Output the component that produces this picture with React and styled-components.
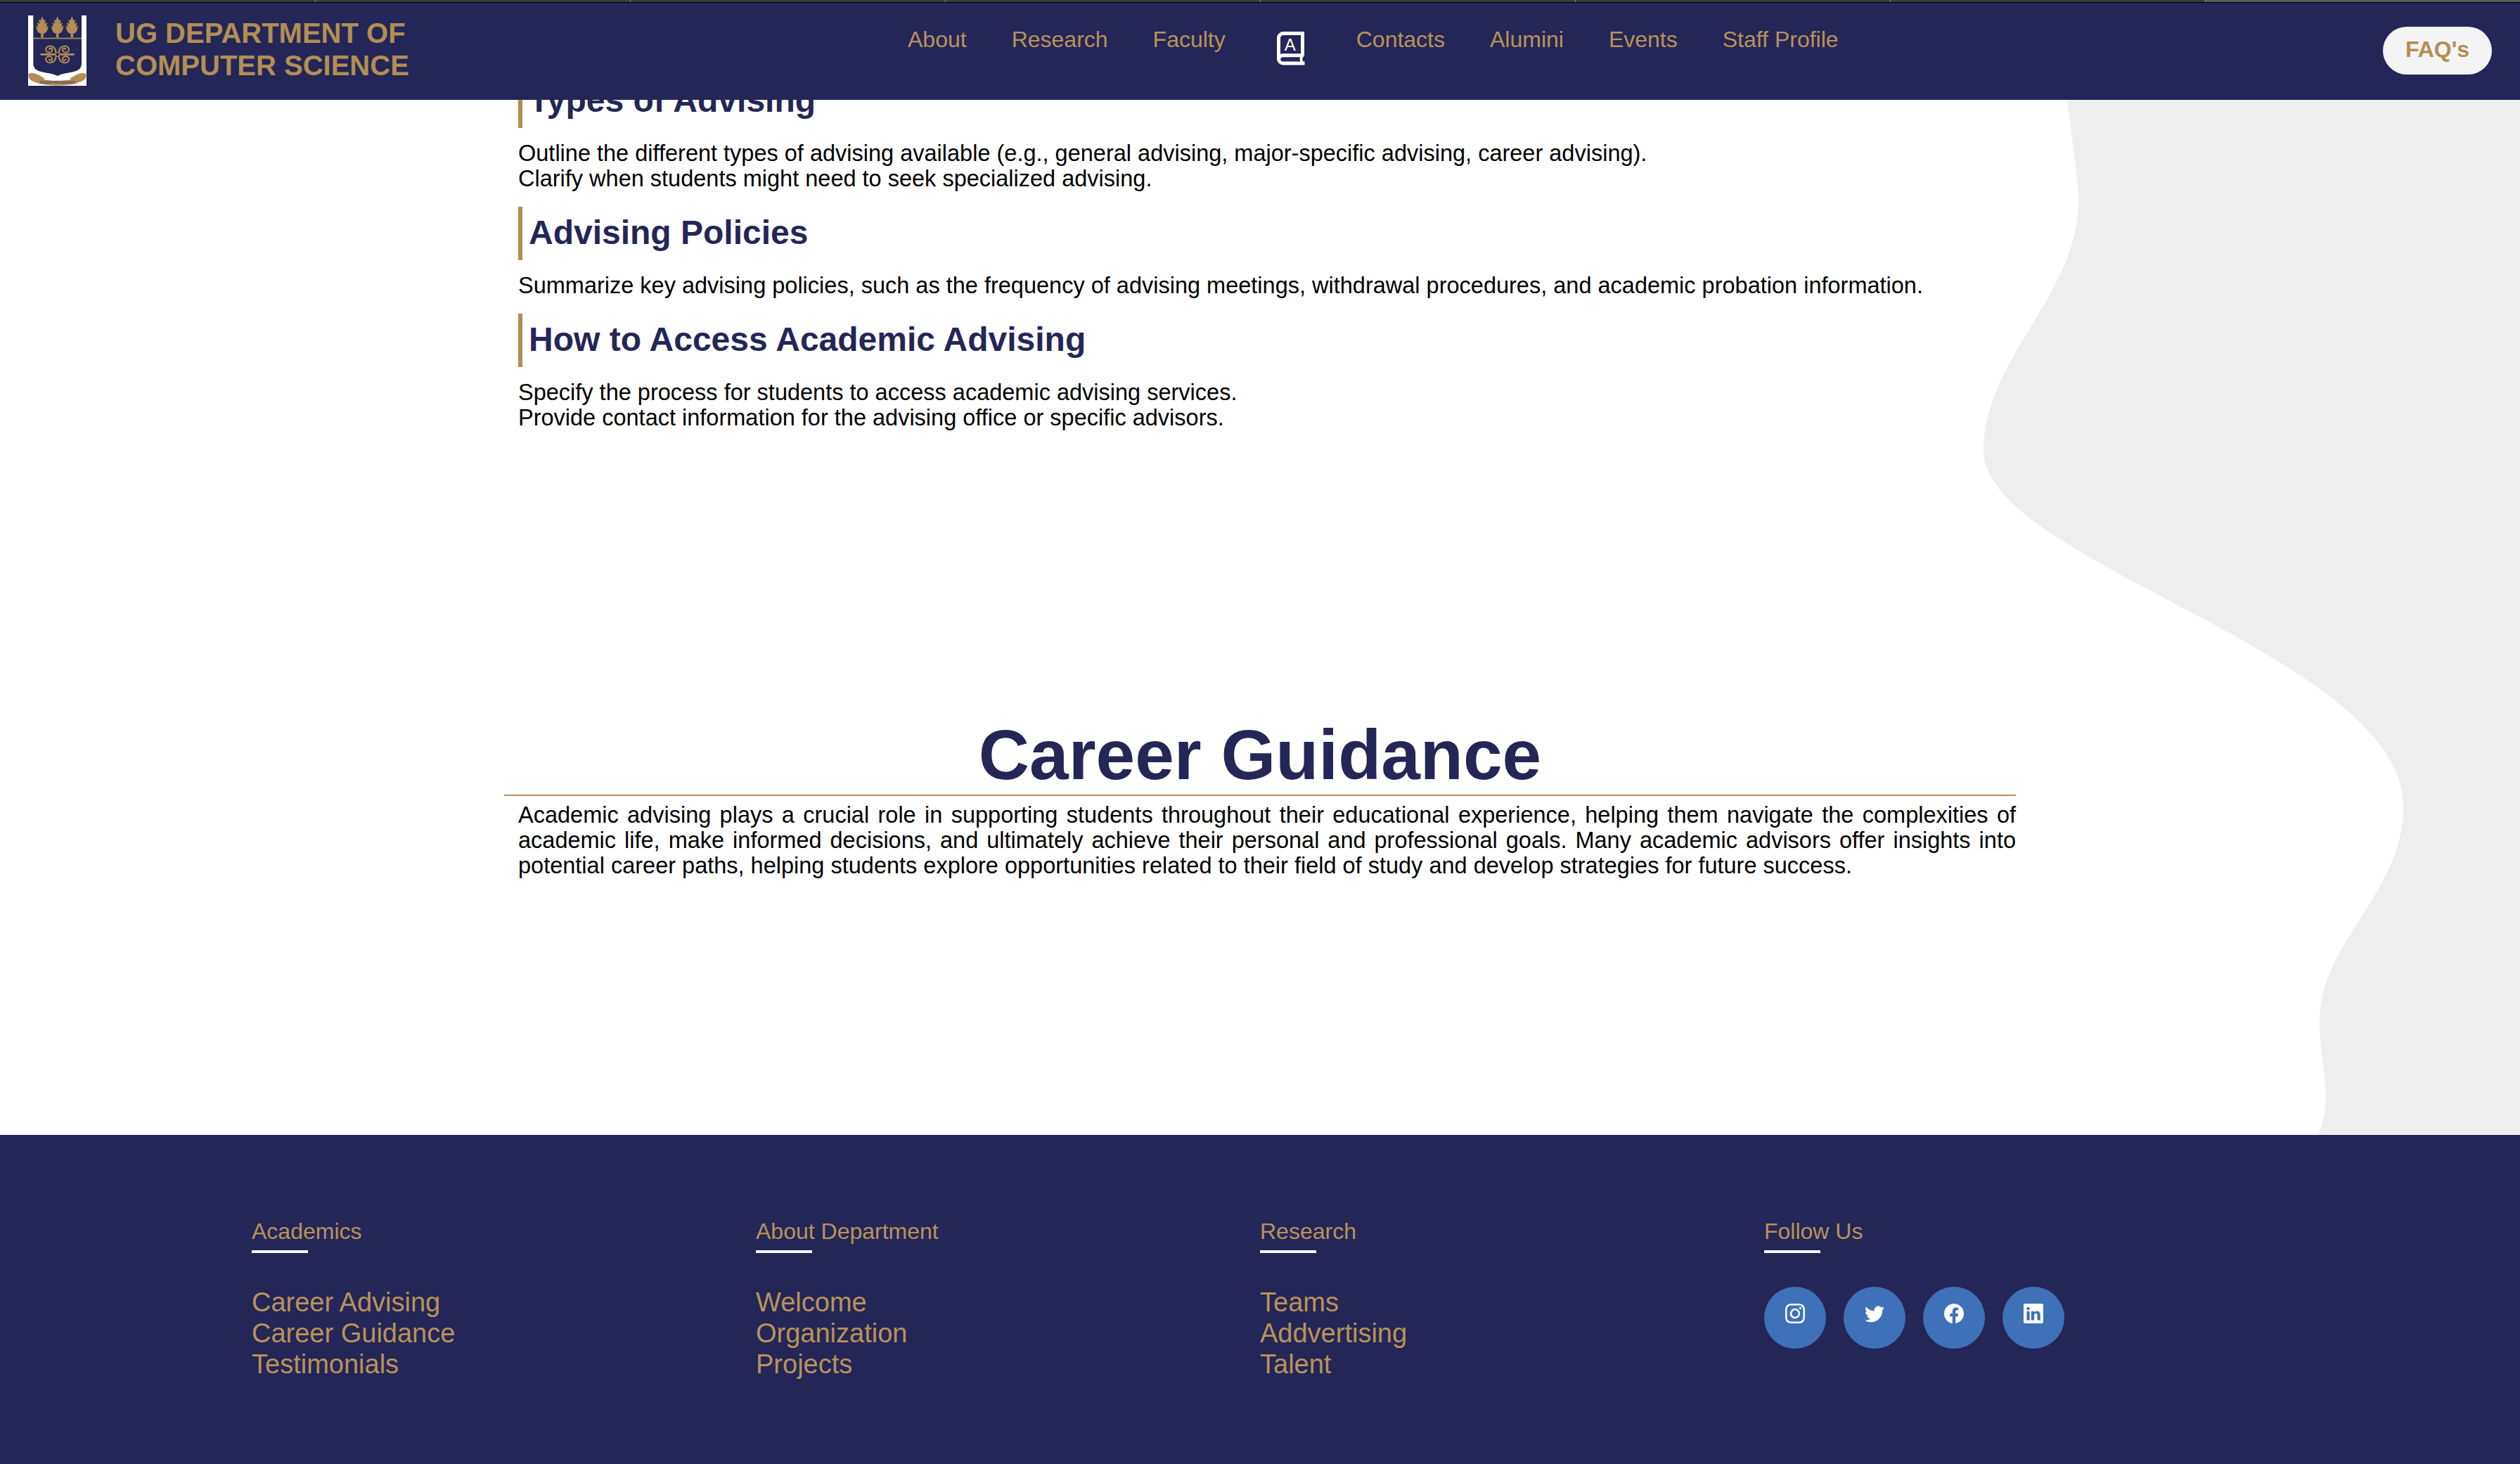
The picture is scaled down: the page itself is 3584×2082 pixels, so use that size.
import styled, { createGlobalStyle } from "styled-components";
import { BsInstagram, BsTwitter, BsFacebook, BsLinkedin } from "react-icons/bs";

const NAVY = "#242657";
const GOLD = "#b28e54";
const GOLD_LIGHT = "#b8935a";

const GlobalStyle = createGlobalStyle`
  html, body {
    margin: 0;
    padding: 0;
    background: #fff;
    font-family: "Liberation Sans", Arial, sans-serif;
  }
  * {
    box-sizing: border-box;
  }
`;

const Page = styled.div`
  width: 3584px;
  min-height: 2082px;
  display: flex;
  flex-direction: column;
`;

const TabStrip = styled.div`
  display: flex;
  height: 4px;
  background: #3a3a3a;
  border-bottom: 1px solid #000;
`;

const Tab = styled.div`
  width: 448px;
  background: ${(p) => (p.$active ? "#5a5a5a" : "#3a3a3a")};
  border-left: 1px solid ${(p) => (p.$first ? "#3a3a3a" : "#8a8a8a")};
`;

const Nav = styled.nav`
  display: grid;
  grid-template-columns: 1251px 1fr auto;
  height: 138px;
  padding: 0 40px;
  background: ${NAVY};
`;

const Brand = styled.a`
  display: flex;
  align-items: center;
  gap: 41px;
  height: 100px;
  margin-top: 18px;
`;

const BrandName = styled.div`
  margin-bottom: 4px;
  font-size: 40px;
  line-height: 46px;
  font-weight: bold;
  color: ${GOLD};
`;

const NavLinks = styled.div`
  display: flex;
  align-items: flex-start;
  gap: 64px;
  margin-top: 34px;
`;

const NavLink = styled.a`
  font-size: 32px;
  line-height: 37px;
  color: ${GOLD_LIGHT};
`;

const BookLink = styled.a`
  display: block;
  width: 58px;
  margin-top: 7px;
  padding-left: 9px;
`;

const FaqButton = styled.button`
  width: 155px;
  height: 68px;
  margin-top: 34px;
  padding: 0 0 3px;
  border: 0;
  border-radius: 34px;
  background: #f4f4f4;
  color: ${GOLD};
  font-family: inherit;
  font-size: 32px;
  font-weight: bold;
`;

const Main = styled.main`
  position: relative;
  height: 1472px;
  overflow: hidden;
  padding-left: 717px;
`;

const Wave = styled.svg`
  position: absolute;
  top: 0;
  right: 0;
  width: 784px;
  height: 1472px;
`;

const Article = styled.article`
  position: relative;
  width: 2150px;
  padding-left: 20px;
  margin-top: -36px;
`;

const SectionTitle = styled.h3`
  height: 76px;
  margin: ${(p) => (p.$first ? "0" : "22px")} 0 18px;
  padding-left: 9px;
  border-left: 6px solid ${GOLD};
  font-size: 48px;
  line-height: 74px;
  font-weight: bold;
  color: ${NAVY};
`;

const Text = styled.p`
  margin: 0;
  font-size: 32.5px;
  line-height: 36px;
  color: #000;
  text-align: ${(p) => (p.$justify ? "justify" : "left")};
`;

const CareerTitle = styled.h2`
  height: 116px;
  margin: 404px 0 9px -20px;
  border-bottom: 2px solid ${GOLD};
  font-size: 100px;
  line-height: 114px;
  font-weight: bold;
  text-align: center;
  color: ${NAVY};
`;

const Footer = styled.footer`
  height: 468px;
  padding-top: 119px;
  background: ${NAVY};
`;

const FooterGrid = styled.div`
  display: grid;
  grid-template-columns: repeat(4, 717px);
  width: 2868px;
  margin: 0 auto;
`;

const ColumnTitle = styled.h4`
  margin: 0 0 48px;
  font-size: 32px;
  line-height: 37px;
  font-weight: normal;
  color: ${GOLD_LIGHT};

  &::after {
    content: "";
    display: block;
    width: 80px;
    height: 4px;
    margin-top: 8px;
    background: #f4f8ff;
  }
`;

const FooterLink = styled.a`
  display: block;
  font-size: 38px;
  line-height: 44px;
  color: ${GOLD_LIGHT};
`;

const Socials = styled.div`
  display: flex;
  gap: 25px;
`;

const SocialButton = styled.a`
  display: flex;
  justify-content: center;
  width: 88px;
  height: 88px;
  padding-top: 24px;
  border-radius: 50%;
  background: #3e71b7;
  color: #fff;
  font-size: 28px;
`;

const Tree = ({ x }) => (
  <path
    transform={`translate(${x} 0)`}
    fill={GOLD}
    d="M0 3 L7 22 L15 17 L11 36 L22 29 L17 50 L27 43 L21 66 C17 74 10 77 5 77 L6 94 H-6 L-5 77 C-10 77 -17 74 -21 66 L-27 43 L-17 50 L-22 29 L-11 36 L-15 17 L-7 22 Z"
  />
);

const spiral = "M118 156 C118 128 80 122 76 143 C73 160 100 164 103 147 C104 139 92 137 90 145";

const Logo = () => (
  <svg width="83" height="100" viewBox="0 0 249 300">
    <rect width="249" height="300" fill="#fff" />
    <path
      fill={NAVY}
      d="M22 0 H228 V205 C228 235 200 240 170 245 C150 248 135 252 125 258 C115 252 100 248 80 245 C50 240 22 235 22 205 Z"
    />
    <Tree x={60} />
    <Tree x={125} />
    <Tree x={187} />
    <rect x="22" y="95" width="206" height="5" fill={GOLD} />
    <g fill="none" stroke={GOLD} strokeWidth="6" strokeLinecap="round">
      <path d={spiral} />
      <path d={spiral} transform="matrix(-1 0 0 1 250 0)" />
      <path d={spiral} transform="matrix(1 0 0 -1 0 332)" />
      <path d={spiral} transform="matrix(-1 0 0 -1 250 332)" />
      <path d="M56 166 H194" strokeWidth="8" />
    </g>
    <circle cx="125" cy="166" r="9" fill={NAVY} stroke={GOLD} strokeWidth="4" />
    <path fill={GOLD} d="M2 250 C20 238 50 255 72 270 L42 288 C20 282 -2 276 2 250 Z" />
    <path fill={GOLD} d="M247 250 C229 238 199 255 177 270 L207 288 C229 282 251 276 247 250 Z" />
    <path fill={GOLD} d="M40 268 C80 282 170 282 210 268 L212 288 C170 302 80 302 38 288 Z" />
    <text
      x="125"
      y="290"
      fontSize="15"
      textAnchor="middle"
      textLength="150"
      lengthAdjust="spacingAndGlyphs"
      fontFamily="Liberation Sans, sans-serif"
      fill={NAVY}
    >
      INTEGRI PROCEDAMUS
    </text>
  </svg>
);

const BookIcon = () => (
  <svg width="40" height="48" viewBox="0 0 40 48" style={{ display: "block" }}>
    <g fill="none" stroke="#fff" strokeWidth="5">
      <path d="M36.5 34 V2.5 H9 A6.5 6.5 0 0 0 2.5 9 V38.5 A6.5 6.5 0 0 0 9 45 H39.5" />
      <path d="M2.5 40 A6 6 0 0 1 9 33.8 H38" />
      <path d="M37 34 C33.5 37 33.5 41.5 37.5 45" strokeWidth="3.6" />
    </g>
    <text
      x="18.8"
      y="27"
      fontSize="24"
      textAnchor="middle"
      fontFamily="Liberation Sans, sans-serif"
      fill="#fff"
    >
      A
    </text>
  </svg>
);

const footerColumns = [
  { title: "Academics", links: ["Career Advising", "Career Guidance", "Testimonials"] },
  { title: "About Department", links: ["Welcome", "Organization", "Projects"] },
  { title: "Research", links: ["Teams", "Addvertising", "Talent"] },
];

const App = () => {
  return (
    <Page>
      <GlobalStyle />
      <TabStrip>
        {[0, 1, 2, 3, 4, 5, 6, 7].map((i) => (
          <Tab key={i} $first={i === 0} $active={i === 7} />
        ))}
      </TabStrip>
      <Nav>
        <Brand>
          <Logo />
          <BrandName>
            UG DEPARTMENT OF
            <br />
            COMPUTER SCIENCE
          </BrandName>
        </Brand>
        <NavLinks>
          <NavLink>About</NavLink>
          <NavLink>Research</NavLink>
          <NavLink>Faculty</NavLink>
          <BookLink>
            <BookIcon />
          </BookLink>
          <NavLink>Contacts</NavLink>
          <NavLink>Alumini</NavLink>
          <NavLink>Events</NavLink>
          <NavLink>Staff Profile</NavLink>
        </NavLinks>
        <FaqButton>FAQ's</FaqButton>
      </Nav>
      <Main>
        <Wave viewBox="2800 142 784 1472">
          <path
            fill="#eeeeee"
            d="M2940 142 C2950 220 2956 260 2956 285 C2956 420 2821 510 2821 641 C2821 800 3418 930 3418 1148 C3418 1270 3299 1340 3299 1452 C3299 1520 3320 1560 3297 1614 L3584 1614 L3584 142 Z"
          />
        </Wave>
        <Article>
          <SectionTitle $first>Types of Advising</SectionTitle>
          <Text>
            Outline the different types of advising available (e.g., general advising, major-specific advising, career advising).
            <br />
            Clarify when students might need to seek specialized advising.
          </Text>
          <SectionTitle>Advising Policies</SectionTitle>
          <Text>
            Summarize key advising policies, such as the frequency of advising meetings, withdrawal procedures, and academic probation information.
          </Text>
          <SectionTitle>How to Access Academic Advising</SectionTitle>
          <Text>
            Specify the process for students to access academic advising services.
            <br />
            Provide contact information for the advising office or specific advisors.
          </Text>
          <CareerTitle>Career Guidance</CareerTitle>
          <Text $justify>
            Academic advising plays a crucial role in supporting students throughout their educational experience, helping them navigate the complexities of academic life, make informed decisions, and ultimately achieve their personal and professional goals. Many academic advisors offer insights into potential career paths, helping students explore opportunities related to their field of study and develop strategies for future success.
          </Text>
        </Article>
      </Main>
      <Footer>
        <FooterGrid>
          {footerColumns.map((col) => (
            <div key={col.title}>
              <ColumnTitle>{col.title}</ColumnTitle>
              {col.links.map((link) => (
                <FooterLink key={link}>{link}</FooterLink>
              ))}
            </div>
          ))}
          <div>
            <ColumnTitle>Follow Us</ColumnTitle>
            <Socials>
              <SocialButton><BsInstagram /></SocialButton>
              <SocialButton><BsTwitter /></SocialButton>
              <SocialButton><BsFacebook /></SocialButton>
              <SocialButton><BsLinkedin /></SocialButton>
            </Socials>
          </div>
        </FooterGrid>
      </Footer>
    </Page>
  );
};

export default App;
